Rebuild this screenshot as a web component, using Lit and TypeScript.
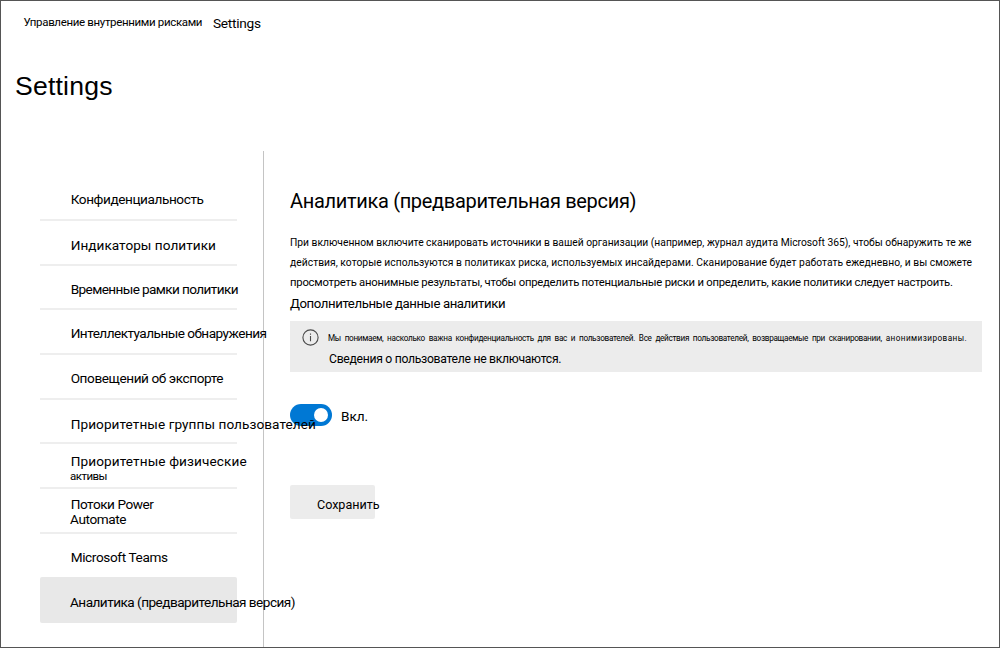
import { LitElement, html, css, nothing } from "lit";
import { customElement, property, state } from "lit/decorators.js";
import { styleMap } from "lit/directives/style-map.js";

/** One line of text whose tracking is adjusted to fill a given width. */
@customElement("fit-line")
class FitLine extends LitElement {
  static styles = css`
    :host { display: block; white-space: pre; }
  `;
  @property() text = "";
  @property({ type: Number }) span = 0;
  @state() private tracking = 0;

  firstUpdated() {
    const el = this.renderRoot.querySelector("span")!;
    const natural = el.getBoundingClientRect().width;
    this.tracking = (this.span - natural) / Math.max(1, this.text.length - 1);
  }

  render() {
    return html`<span style=${styleMap({ letterSpacing: `${this.tracking}px` })}>${this.text}</span>`;
  }
}

interface NavItem {
  lines: [string, number][];
  kind: string;
}

const NAV: NavItem[] = [
  { lines: [["Конфиденциальность", 133.2]], kind: "p15" },
  { lines: [["Индикаторы политики", 145.2]], kind: "p16" },
  { lines: [["Временные рамки политики", 167.8]], kind: "p16" },
  { lines: [["Интеллектуальные обнаружения", 196.3]], kind: "p15" },
  { lines: [["Оповещений об экспорте", 152.8]], kind: "p15" },
  { lines: [["Приоритетные группы пользователей", 245.2]], kind: "p17" },
  { lines: [["Приоритетные физические", 176], ["активы", 37.5]], kind: "p9" },
  { lines: [["Потоки Power", 83.2], ["Automate", 56.5]], kind: "p7" },
  { lines: [["Microsoft Teams", 97.3]], kind: "p16" },
  { lines: [["Аналитика (предварительная версия)", 225.5]], kind: "selected" },
];

@customElement("app-root")
class AppRoot extends LitElement {
  static styles = css`
    :host {
      display: block;
      font-family: Roboto, "Liberation Sans", sans-serif;
      color: #000;
    }
    .frame {
      box-sizing: border-box;
      width: 1000px;
      height: 648px;
      border: 1px solid #555;
      background: #fff;
      overflow: hidden;
      display: flex;
      flex-direction: column;
    }
    .crumbs { display: flex; height: 70px; padding: 13px 0 0 22.5px; box-sizing: border-box; }
    .crumbs .parent { font-size: 11.5px; line-height: 16px; width: 189.5px; }
    .crumbs .here { font-size: 13.7px; line-height: 16px; padding-top: 1px; }
    h1 {
      margin: 0;
      height: 80px;
      padding-left: 14px;
      font-family: "Liberation Sans", sans-serif;
      font-weight: 400;
      font-size: 26.6px;
      line-height: 30px;
    }
    .body { flex: 1; display: flex; }
    nav {
      box-sizing: border-box;
      width: 263px;
      padding: 25.4px 0 0 39px;
      border-right: 1px solid #c4c4c4;
      font-size: 13.6px;
      line-height: 16px;
      position: relative;
      z-index: 1;
    }
    .item {
      box-sizing: border-box;
      width: 197px;
      height: 44.67px;
      padding-left: 30.7px;
      border-bottom: 2px solid #eee;
    }
    .item:nth-child(9) { border-bottom: 0; height: 43.67px; }
    .p7 { padding-top: 8px; line-height: 15px; }
    .p9 { padding-top: 10px; line-height: 15px; }
    .p9 .second { font-size: 11.5px; line-height: 14px; }
    .second { margin-left: -0.7px; }
    .p15 { padding-top: 15px; }
    .p16 { padding-top: 15.7px; }
    .p17 { padding-top: 16.5px; }
    .selected { background: #e8e8e8; border: 0; border-radius: 2px; height: 46px; padding-left: 30px; padding-top: 16.8px; }
    main { padding: 38px 0 0 26px; width: 692px; }
    h2 { margin: 0; font-weight: 400; font-size: 20px; line-height: 24px; height: 44px; }
    .para { font-size: 10.3px; line-height: 20px; }
    .para .big { font-size: 11.3px; }
    .link { font-size: 13.2px; line-height: 20px; height: 28px; padding-top: 1px; box-sizing: border-box; }
    .info { background: #ececec; height: 51px; display: flex; box-sizing: border-box; padding: 8px 0 0 12px; gap: 9px; }
    .info svg { flex: none; }
    .note { display: flex; font-size: 8.2px; line-height: 16px; height: 21px; word-spacing: 2px; padding-top: 1px; box-sizing: border-box; }
    .note .tail { margin-left: 4px; }
    .note2 { font-size: 12.2px; line-height: 17px; margin-left: 1px; padding-top: 1px; }
    .switch { display: flex; padding-top: 32px; gap: 9px; }
    .track {
      box-sizing: border-box;
      width: 42px;
      height: 22px;
      border-radius: 11px;
      background: #0078d4;
      padding: 4px;
      display: flex;
      justify-content: flex-end;
    }
    .knob { width: 14px; height: 14px; border-radius: 50%; background: #fff; }
    .switch fit-line { font-size: 13.6px; line-height: 16px; padding-top: 4px; }
    .save {
      display: block;
      box-sizing: border-box;
      margin: 59px 0 0;
      border: 0;
      width: 85px;
      height: 34px;
      padding: 6px 0 0 27px;
      border-radius: 2px;
      background: #ececec;
      color: inherit;
      font: 12.6px/16px Roboto, sans-serif;
      text-align: left;
    }
  `;

  render() {
    return html`
      <div class="frame">
        <div class="crumbs">
          <fit-line class="parent" text="Управление внутренними рисками" span="179"></fit-line>
          <fit-line class="here" text="Settings" span="48"></fit-line>
        </div>
        <h1><fit-line text="Settings" span="97.5"></fit-line></h1>
        <div class="body">
          <nav>
            ${NAV.map(
              (item) => html`<div class="item ${item.kind}">
                ${item.lines.map(
                  ([text, span], i) => html`<fit-line class=${i ? "second" : nothing} text=${text} span=${span}></fit-line>`
                )}
              </div>`
            )}
          </nav>
          <main>
            <h2><fit-line text="Аналитика (предварительная версия)" span="346.5"></fit-line></h2>
            <div class="para">
              <fit-line text="При включенном включите сканировать источники в вашей организации (например, журнал аудита Microsoft 365), чтобы обнаружить те же" span="681.5"></fit-line>
              <fit-line text="действия, которые используются в политиках риска, используемых инсайдерами. Сканирование будет работать ежедневно, и вы сможете" span="682"></fit-line>
              <fit-line class="big" text="просмотреть анонимные результаты, чтобы определить потенциальные риски и определить, какие политики следует настроить." span="663"></fit-line>
            </div>
            <fit-line class="link" text="Дополнительные данные аналитики" span="215.5"></fit-line>
            <div class="info">
              <svg width="17" height="17" viewBox="0 0 17 17" fill="none" stroke="#4a4a4a">
                <circle cx="8.5" cy="8.5" r="7.6" stroke-width="1.1" />
                <path d="M8.5 7v5.2M8.5 4.6v1.2" stroke-width="1.1" />
              </svg>
              <div>
                <div class="note">
                  <fit-line text="Мы понимаем, насколько важна конфиденциальность для вас и пользователей. Все действия пользователей, возвращаемые при сканировании," span="554"></fit-line>
                  <fit-line class="tail" text="анонимизированы." span="81"></fit-line>
                </div>
                <fit-line class="note2" text="Сведения о пользователе не включаются." span="232.5"></fit-line>
              </div>
            </div>
            <div class="switch">
              <div class="track"><div class="knob"></div></div>
              <fit-line text="Вкл." span="27"></fit-line>
            </div>
            <button class="save"><fit-line text="Сохранить" span="62.5"></fit-line></button>
          </main>
        </div>
      </div>
    `;
  }
}
